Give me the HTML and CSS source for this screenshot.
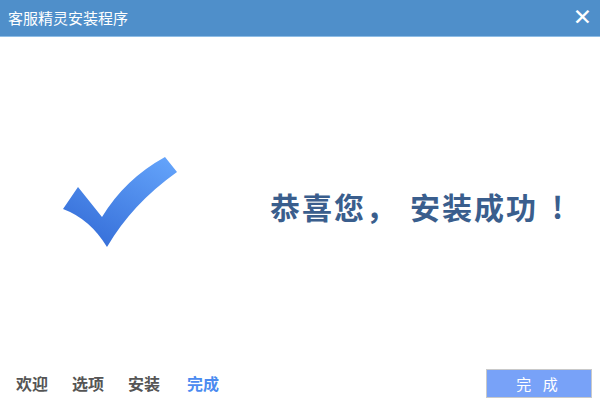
FILE: index.html
```html
<!DOCTYPE html>
<html lang="zh-CN">
<head>
  <meta charset="UTF-8">
  <title>客服精灵安装程序</title>
  <link rel="stylesheet" href="styles.css">
</head>
<body>
  <div class="window">
    <div class="titlebar">
      <span class="title">客服精灵安装程序</span>
      <span class="close">✕</span>
    </div>

    <div class="main">
      <svg class="check" width="120" height="96" viewBox="0 0 120 96">
        <defs>
          <linearGradient id="checkGrad" x1="1" y1="0" x2="0.3" y2="1">
            <stop offset="0" stop-color="#66a6fc"/>
            <stop offset="1" stop-color="#366fd9"/>
          </linearGradient>
        </defs>
        <path d="M3 55 L18 33 L42 63 Q65 25 105 3 L117 18 Q72 50 47 93 Q30 65 3 55 Z" fill="url(#checkGrad)"/>
      </svg>
      <div class="message">恭喜您<span class="comma">，</span>安装成功<span class="bang">!</span></div>
    </div>

    <div class="footer">
      <div class="steps">
        <span class="step">欢迎</span>
        <span class="step">选项</span>
        <span class="step">安装</span>
        <span class="step current">完成</span>
      </div>
      <button class="finish">完 成</button>
    </div>
  </div>
</body>
</html>
```

FILE: styles.css
```css
* {
  box-sizing: border-box;
}

html, body {
  margin: 0;
  padding: 0;
  width: 600px;
  height: 414px;
  overflow: hidden;
  background: #ffffff;
  font-family: "Noto Sans CJK SC", "Noto Sans", sans-serif;
}

.window {
  display: flex;
  flex-direction: column;
  width: 600px;
  height: 414px;
}

.titlebar {
  display: flex;
  align-items: center;
  justify-content: space-between;
  height: 37px;
  padding: 0 8px 1px 8px;
  background: #4f8fca;
  border-bottom: 1px solid #8ebde6;
}

.title {
  color: #ffffff;
  font-size: 15px;
  line-height: 1;
}

.close {
  color: #ffffff;
  font-family: "DejaVu Sans", sans-serif;
  font-size: 23px;
  font-weight: bold;
  line-height: 1;
}

.main {
  display: flex;
  align-items: center;
  height: 330px;
  padding-left: 60px;
}

.check {
  flex: none;
}

.message {
  margin-left: 90px;
  margin-top: 8px;
  color: #3a5e8d;
  font-size: 30px;
  font-weight: bold;
  letter-spacing: 2px;
}

.comma {
  margin-right: 12px;
}

.bang {
  margin-left: 14px;
}

.footer {
  display: flex;
  align-items: center;
  justify-content: space-between;
  height: 32px;
  padding: 0 8px 0 16px;
}

.steps {
  display: flex;
  gap: 24px;
}

.step {
  color: #555555;
  font-size: 16px;
  font-weight: bold;
  line-height: 1;
}

.step.current {
  color: #4b8bf0;
  margin-left: 3px;
}

.finish {
  width: 106px;
  height: 29px;
  padding: 0;
  background: #78a2f8;
  border: 1px solid #c9c9c9;
  color: #ffffff;
  font-family: "Noto Sans CJK SC", sans-serif;
  font-size: 15px;
  letter-spacing: 4px;
}
```
